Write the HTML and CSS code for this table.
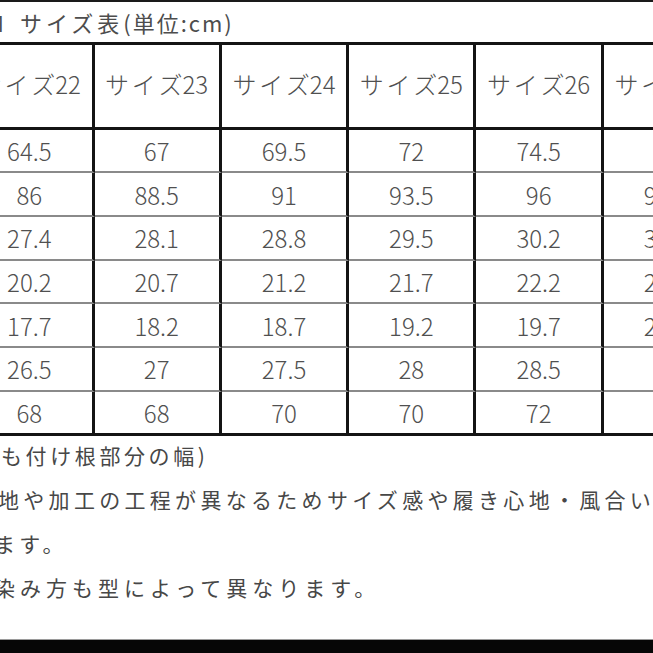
FILE: index.html
```html
<!DOCTYPE html>
<html lang="ja">
<head>
<meta charset="utf-8">
<title>サイズ表</title>
<link rel="stylesheet" href="styles.css">
</head>
<body>
<div class="topbar"></div>
<div class="title"><span class="t-m">M</span><span class="t-main">サイズ表<span class="t-unit">(単位:cm)</span></span></div>
<div class="sheet">
  <div class="cell head"><span class="ks">サイ</span>ズ22</div>
  <div class="cell head"><span class="ks">サイ</span>ズ23</div>
  <div class="cell head"><span class="ks">サイ</span>ズ24</div>
  <div class="cell head"><span class="ks">サイ</span>ズ25</div>
  <div class="cell head"><span class="ks">サイ</span>ズ26</div>
  <div class="cell head"><span class="ks">サイ</span>ズ27</div>

  <div class="cell">64.5</div><div class="cell">67</div><div class="cell">69.5</div><div class="cell">72</div><div class="cell">74.5</div><div class="cell">77</div>
  <div class="cell">86</div><div class="cell">88.5</div><div class="cell">91</div><div class="cell">93.5</div><div class="cell">96</div><div class="cell">98.5</div>
  <div class="cell">27.4</div><div class="cell">28.1</div><div class="cell">28.8</div><div class="cell">29.5</div><div class="cell">30.2</div><div class="cell">30.9</div>
  <div class="cell">20.2</div><div class="cell">20.7</div><div class="cell">21.2</div><div class="cell">21.7</div><div class="cell">22.2</div><div class="cell">22.7</div>
  <div class="cell">17.7</div><div class="cell">18.2</div><div class="cell">18.7</div><div class="cell">19.2</div><div class="cell">19.7</div><div class="cell">20.2</div>
  <div class="cell">26.5</div><div class="cell">27</div><div class="cell">27.5</div><div class="cell">28</div><div class="cell">28.5</div><div class="cell">29</div>
  <div class="cell last">68</div><div class="cell last">68</div><div class="cell last">70</div><div class="cell last">70</div><div class="cell last">72</div><div class="cell last">72</div>
</div>
<div class="notes">
  <div class="line l1">も付け根部分の幅)</div>
  <div class="line l2">地や加工の工程が異なるためサイズ感や履き心地・風合い</div>
  <div class="line l3">ます。</div>
  <div class="line l4">染み方も型によって異なります。</div>
</div>
<div class="bottombar"></div>
</body>
</html>
```

FILE: styles.css
```css
html, body {
  margin: 0;
  padding: 0;
}

body {
  width: 653px;
  height: 653px;
  overflow: hidden;
  background: #ffffff;
  display: flex;
  flex-direction: column;
  font-family: "Noto Sans CJK JP", "Noto Sans", sans-serif;
  color: #505050;
}

.topbar {
  flex: 0 0 1.5px;
  background: #1a1a1a;
}

.title {
  flex: 0 0 40px;
  display: flex;
  align-items: center;
  font-size: 22px;
  white-space: nowrap;
  color: #4d4d4d;
}

.t-m {
  margin-left: -14px;
}

.t-main {
  margin-left: 16px;
  letter-spacing: 4px;
}

.t-unit {
  letter-spacing: 2px;
}

.sheet {
  flex: 0 0 auto;
  display: grid;
  grid-template-columns: repeat(6, 127.33px);
  grid-template-rows: 85px repeat(6, 43.7px) 44.2px;
  width: 764px;
  margin-left: -32.83px;
  border-top: 3px solid #141414;
}

.cell {
  box-sizing: border-box;
  display: flex;
  align-items: center;
  justify-content: center;
  border-right: 3px solid #141414;
  border-bottom: 2px solid #8a8a8a;
  font-size: 24px;
  font-weight: 300;
  white-space: nowrap;
  line-height: 1;
  padding-top: 1px;
}

.cell.head {
  border-bottom: 3px solid #141414;
  padding-top: 0;
  padding-bottom: 3px;
}

.cell.last {
  border-bottom: 3px solid #141414;
}

.ks {
  letter-spacing: 2.7px;
}

.notes {
  flex: 1 1 auto;
  font-size: 21px;
  letter-spacing: 4.3px;
  color: #474747;
  white-space: nowrap;
}

.line {
  line-height: 44px;
}

.l1 {
  margin-top: -3px;
  margin-left: 1px;
  letter-spacing: 3.6px;
}

.l2 {
  margin-left: -2px;
}

.l3 {
  margin-left: -6px;
}

.l4 {
  margin-left: -6px;
  letter-spacing: 5px;
}

.bottombar {
  flex: 0 0 13px;
  background: #060606;
  border-top: 1px solid #9a9a9a;
}
```
